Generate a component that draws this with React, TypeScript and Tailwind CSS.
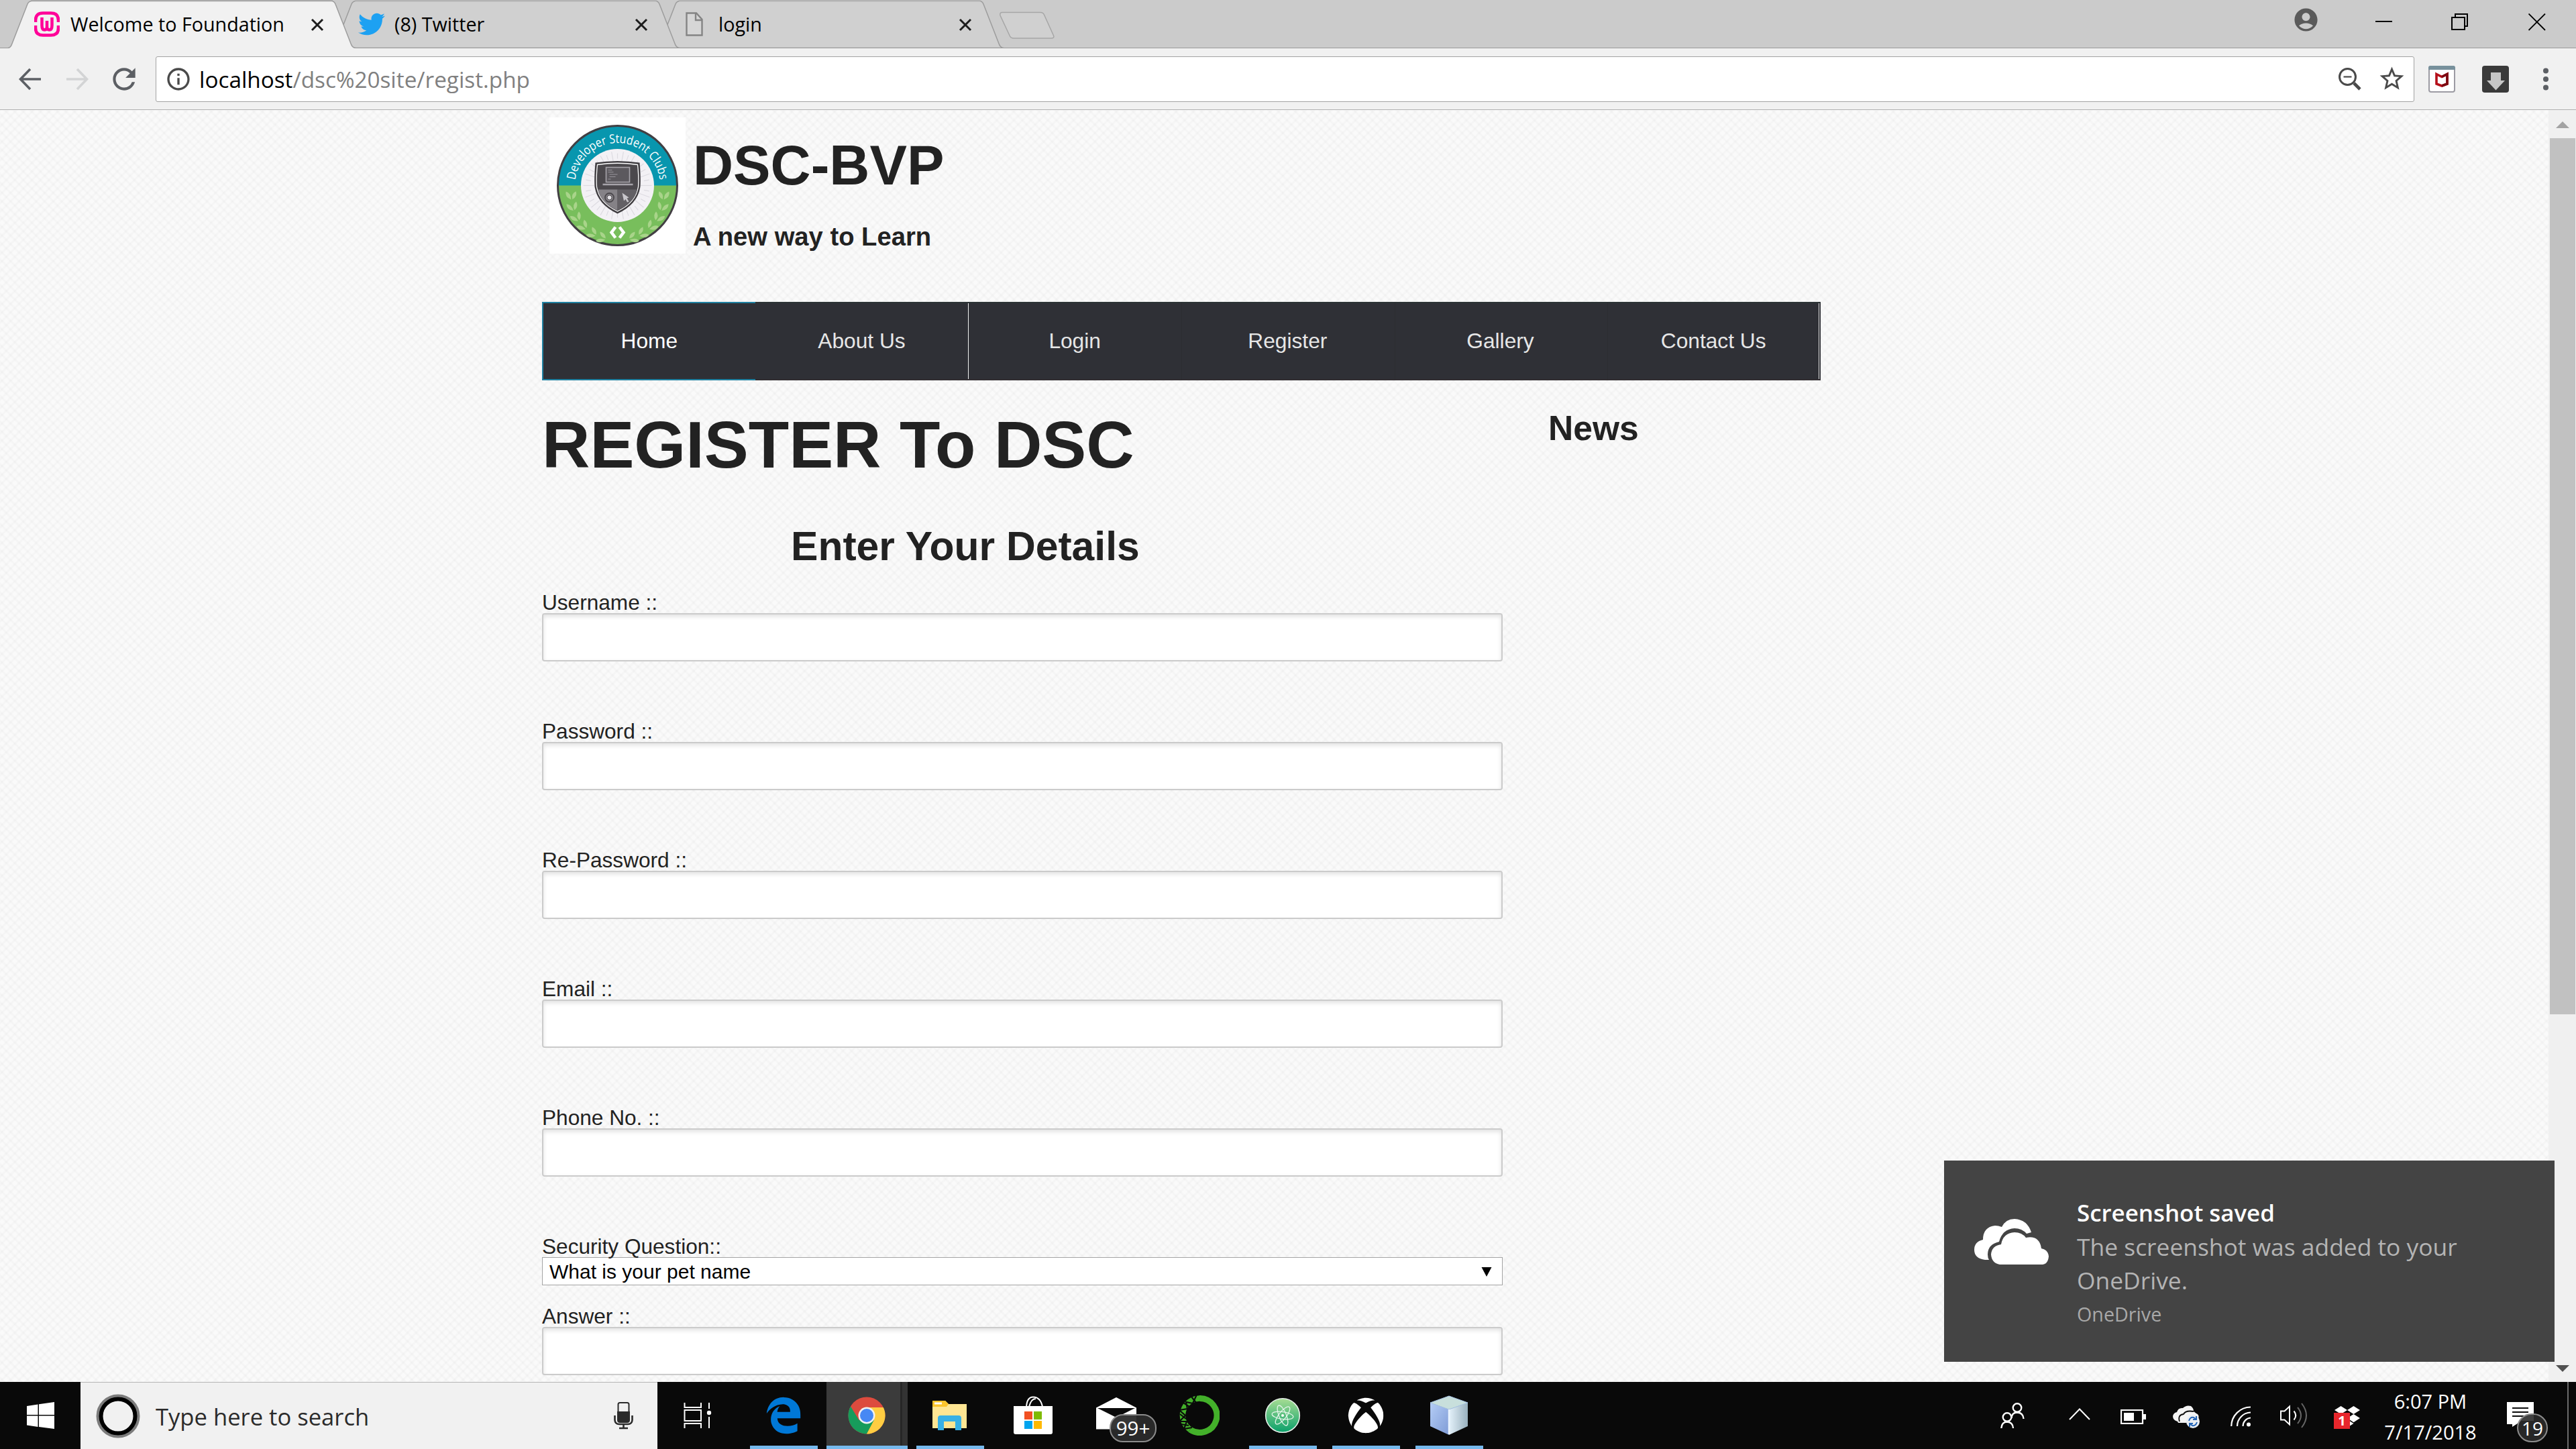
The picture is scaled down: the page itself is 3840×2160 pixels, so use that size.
import type { ReactNode } from "react";
import { FaEdgeLegacy, FaTwitter, FaXbox, FaDropbox } from "react-icons/fa";
import { MdAccountCircle, MdInfoOutline, MdRefresh, MdStarBorder } from "react-icons/md";

/* ---------- browser tabs ---------- */

function TabShape({ active }: { active?: boolean }) {
  const d = "M0 71.5 Q4 71 6 65 L29 6 Q31 1.5 36 1.5 L482 1.5 Q486 1.5 488 6 L511 65 Q513 71 518 71.5";
  return (
    <svg className="absolute inset-0" width="518" height="72" viewBox="0 0 518 72" fill="none">
      <path d={d + " L518 72 L0 72 Z"} fill={active ? "#f1f1f1" : "#d0d0d0"} />
      <path d={d} stroke="#9c9c9c" strokeWidth="1.5" />
      <path d="M34 1 H484" stroke={active ? "#a9a9a9" : "#b3b3b3"} strokeWidth="2" />
      {!active && <path d="M3 71.5 H516" stroke="#9a9a9a" strokeWidth="1.3" />}
    </svg>
  );
}

function CloseX() {
  return (
    <svg width="20" height="20" viewBox="0 0 20 20" stroke="#1c1c1c" strokeWidth="3">
      <path d="M2 2 L18 18 M18 2 L2 18" />
    </svg>
  );
}

function Tab({ icon, title, active, z }: { icon: ReactNode; title: string; active?: boolean; z: string }) {
  return (
    <div className={`relative -mr-[35px] h-[72px] w-[518px] shrink-0 ${z}`}>
      <TabShape active={active} />
      <div className="relative flex h-[71px] items-center pl-[39px] pr-[47px]">
        <div className="flex w-[54px] items-center">{icon}</div>
        <div className="flex-1 whitespace-nowrap text-[28.7px] leading-10 text-black">{title}</div>
        <div className="pt-[3px]">
          <CloseX />
        </div>
      </div>
    </div>
  );
}

function WampIcon() {
  return (
    <svg width="38" height="38" viewBox="0 0 38 38" fill="none">
      <path d="M2 16 V13 Q2 2.5 13 2.5 H25 Q36 2.5 36 13 V16 M2 21 V25 Q2 35.500 13 35.500 H25 Q36 35.500 36 25 V21" stroke="#ff0098" strokeWidth="4.600" />
      <path d="M11.500 9 V21 Q11.500 27.500 15.500 27.500 Q19 27.500 19 22 V14 V22 Q19 27.500 22.500 27.500 Q26.500 27.500 26.500 21 V9" stroke="#ff0098" strokeWidth="4.500" />
    </svg>
  );
}

function PageIcon() {
  return (
    <svg width="26" height="36" viewBox="0 0 26 36" fill="none" stroke="#848484" strokeWidth="2.400" className="ml-[5px]">
      <path d="M1.500 1.500 H16 L24.500 11 V34.500 H1.500 Z" fill="#d6d6d6" />
      <path d="M15 2 V12 H24" />
    </svg>
  );
}

function TabStrip() {
  return (
    <div className="flex h-[72px] justify-between border-b border-[#999] bg-[#cbcbcb]">
      <div className="flex h-[72px] pl-3">
        <Tab z="z-30" active title="Welcome to Foundation" icon={<WampIcon />} />
        <Tab z="z-20" title="(8) Twitter" icon={<FaTwitter size={40} color="#1da1f2" />} />
        <Tab z="z-10" title="login" icon={<PageIcon />} />
        <svg width="84" height="42" viewBox="0 0 84 42" className="ml-[28px] mt-[17px]">
          <path d="M5 1.500 H62 Q66 1.500 67.500 5 L81.500 36 Q83 40 78 40 H22 Q18 40 16.500 37 L2 6 Q1 1.500 5 1.500 Z" fill="#d0d0d0" stroke="#a6a6a6" strokeWidth="1.500" />
        </svg>
      </div>
      <div className="flex items-start pr-[45px]">
        <MdAccountCircle size={41} color="#5a5a5a" className="mr-[83px] mt-[9px]" />
        <svg width="26" height="26" viewBox="0 0 26 26" className="mr-[87px] mt-5">
          <path d="M0 12 H25" stroke="#000" strokeWidth="2" />
        </svg>
        <svg width="26" height="26" viewBox="0 0 26 26" fill="none" stroke="#000" strokeWidth="2" className="mr-[89px] mt-5">
          <path d="M1 6 H20 V24 H1 Z M6 6 V1 H24 V19 H20" />
        </svg>
        <svg width="26" height="26" viewBox="0 0 26 26" stroke="#000" strokeWidth="1.800" className="mt-5">
          <path d="M0.500 0.500 L25 25 M25 0.500 L0.500 25" />
        </svg>
      </div>
    </div>
  );
}

/* ---------- toolbar ---------- */

function Arrow({ color, flip }: { color: string; flip?: boolean }) {
  return (
    <svg width="34" height="34" viewBox="0 0 34 34" fill="none" stroke={color} strokeWidth="3.600" className={flip ? "-scale-x-100" : ""}>
      <path d="M17 2 L2.500 17 L17 32 M3 17 H33" />
    </svg>
  );
}

function Toolbar() {
  return (
    <div className="flex h-[92px] items-center border-b border-[#b0b0b0] bg-[#f1f1f1] pl-7">
      <Arrow color="#5c5f64" />
      <div className="ml-9">
        <Arrow color="#d3d4d5" flip />
      </div>
      <MdRefresh size={50} color="#5c5f64" className="ml-7" />
      <div className="ml-[22px] flex h-[68px] w-[3367px] items-center rounded-[3px] border border-[#a3a3a3] bg-white pl-[13px] pr-[11px]">
        <MdInfoOutline size={40} color="#4a4a4a" />
        <div className="ml-[11px] flex-1 text-[33.3px] leading-10 text-[#808080]">
          <span className="text-black">localhost</span>/dsc%20site/regist.php
        </div>
        <svg width="34" height="34" viewBox="0 0 34 34" fill="none" stroke="#4a4a4a">
          <circle cx="13.500" cy="13.500" r="12" strokeWidth="3" />
          <path d="M7.500 13.500 H19.500" strokeWidth="2.200" />
          <path d="M23 23 L32 32" strokeWidth="4.600" />
        </svg>
        <MdStarBorder size={43} color="#4a4a4a" className="ml-6" />
      </div>
      <svg width="40" height="40" viewBox="0 0 40 40" className="ml-[21px]">
        <rect x="1" y="1" width="38" height="38" rx="3" fill="#fff" stroke="#9c9ba3" strokeWidth="2" />
        <path d="M0 6 V3 Q0 0 3 0 H37 Q40 0 40 3 V6 Z" fill="#78919c" />
        <path d="M12 12.500 L20 16.500 L28 12.500 V27 L20 30 L12 27 Z" fill="none" stroke="#b5101a" strokeWidth="3.600" />
        <path d="M20 16.500 L28 12.500 V27 L20 30" fill="none" stroke="#7d0a12" strokeWidth="3.600" />
      </svg>
      <svg width="40" height="40" viewBox="0 0 40 40" className="ml-10">
        <rect width="40" height="40" rx="4" fill="#3a3a3a" />
        <path d="M13 10 H28 V22 H34 L20.500 36.500 L7 22 H13 Z" fill="#c6c6c6" />
      </svg>
      <svg width="10" height="34" viewBox="0 0 10 34" fill="#5c5f64" className="ml-[50px]">
        <circle cx="5" cy="4.500" r="4" />
        <circle cx="5" cy="17" r="4" />
        <circle cx="5" cy="29.500" r="4" />
      </svg>
    </div>
  );
}

/* ---------- club badge ---------- */

const rays = Array.from({ length: 36 }, (_, i) => i * 10);
const leaves = [
  [-70, 15, -28], [-68, 32, -42], [-62, 48, -55], [-52, 61, -68], [-38, 72, -80], [-24, 79, -92],
];

function ClubBadge() {
  return (
    <svg width="203" height="203" viewBox="-101.500 -101.500 203 203" className="bg-white">
      <circle r="89" fill="#78be5c" />
      <path d="M-89 0 A89 89 0 0 1 89 0 Z" fill="#0896ae" />
      <circle r="89" fill="none" stroke="#423f43" strokeWidth="3" />
      <circle r="54.500" fill="#f3f1f5" />
      {rays.map((a, i) => (
        <path key={a} d={i % 2 ? "M40 0 H48" : "M30 0 H51"} stroke="#dddbe1" strokeWidth="1.200" transform={`rotate(${a})`} />
      ))}
      <defs>
        <path id="arc" d="M-63.500 0 A63.500 63.500 0 0 1 63.500 0" />
      </defs>
      <text fill="#fff" className="font-['Open_Sans',sans-serif] text-[18.500px] font-medium">
        <textPath href="#arc" startOffset="8" textLength="183" lengthAdjust="spacingAndGlyphs">
          Developer Student Clubs
        </textPath>
      </text>
      {leaves.map(([x, y, r]) =>
        [1, -1].map((s) => (
          <g key={`${x}${s}`} transform={`scale(${s} 1) translate(${x} ${y}) rotate(${r + 20})`} fill="#a9d48a">
            <path d="M0 6 Q-9 1 -6 -7 Q1 -4 0 6 Z" />
            <path d="M2 6 Q1 -3 9 -5 Q10 3 2 6 Z" />
          </g>
        )),
      )}
      <path d="M-3 62 L-9 70 L-3 78 M3 62 L9 70 L3 78" stroke="#fff" strokeWidth="4.500" fill="none" />
      <path d="M-33 -34 Q0 -39 33 -34 Q35 -12 34 2 Q30 28 0 42 Q-30 28 -34 2 Q-35 -12 -33 -34 Z" fill="#3f3c40" />
      <path d="M-30 -31 Q0 -35.500 30 -31 Q32 -12 31 2 Q27 26 0 38.500 Q-27 26 -31 2 Q-32 -12 -30 -31 Z" fill="#4b484c" stroke="#fff" strokeWidth="1.300" />
      <path d="M-29.500 6 H0 V37 Q-25 26 -29.500 6 Z" fill="#858287" />
      <path d="M29.500 6 H0 V37 Q25 26 29.500 6 Z" fill="#636065" />
      <rect x="-17" y="-27" width="35" height="22" fill="#5c595e" stroke="#a7a4aa" strokeWidth="1.600" />
      <path d="M-22 -1.500 H23" stroke="#a7a4aa" strokeWidth="2.600" />
      <path d="M-14 -23 H-8 M-14 -20 H-6 M-12 -16.500 H0 M-12 -13 H-3 M-14 -9.500 H-10" stroke="#98959b" strokeWidth="1.200" />
      <circle cx="-12" cy="18" r="6.500" fill="none" stroke="#4b484c" strokeWidth="1.800" />
      <circle cx="-12" cy="18" r="3.500" fill="#e6e4e8" stroke="#4b484c" />
      <path d="M7 11 L17 18 L14 19 L17 24 L14.500 25 L12 20.500 L9.500 23 Z" fill="#c9c7cc" />
    </svg>
  );
}

/* ---------- page ---------- */

function Nav() {
  const cell = "flex items-center justify-center border-y-2 border-t-[#2d3436] border-b-[#322e32] text-[31.700px] text-[#e6e6e6]";
  return (
    <nav className="grid h-[117px] w-[1906px] grid-cols-6 bg-[#2f3036]">
      <div className="flex items-center justify-center border-y-2 border-l-2 border-[#1f80a0] text-[31.700px] text-white">Home</div>
      <div className={cell}>About Us</div>
      <div className={cell}>
        <div className="-mr-px h-full w-px bg-[#f0f0f0]" />
        <div className="flex-1 text-center">Login</div>
      </div>
      <div className={`${cell} border-l border-l-[#2c2d32] pr-[2px]`}>Register</div>
      <div className={`${cell} border-l border-l-[#2c2d32] pr-[3px]`}>Gallery</div>
      <div className={`${cell} border-l border-l-[#2c2d32]`}>
        <div className="flex-1 text-center">Contact Us</div>
        <div className="mr-[2px] h-full w-px bg-[#e0e0e0]" />
      </div>
    </nav>
  );
}

function Field({ label }: { label: string }) {
  return (
    <label className="block text-[31.600px] leading-8 text-[#222]">
      {label}
      <span className="block h-[72px] w-full rounded-[4px] border-2 border-[#cbcbcb] bg-white shadow-[inset_0_3px_6px_rgba(0,0,0,0.12)]" />
    </label>
  );
}

function Page() {
  return (
    <div className="h-full w-[3799px] overflow-hidden bg-[#fafafa] bg-[repeating-linear-gradient(45deg,transparent_0_2px,rgba(0,0,0,0.019)_4px_5px,transparent_7px_9px),repeating-linear-gradient(-45deg,transparent_0_2px,rgba(0,0,0,0.019)_4px_5px,transparent_7px_9px)] pl-[808px] font-['Liberation_Sans',Arial,sans-serif] text-[#222]">
      <header className="flex h-[286px] pl-[11px] pt-[11px]">
        <ClubBadge />
        <div className="ml-[11px] mt-[22px] font-bold">
          <h1 className="text-[83.200px] leading-[100px]">DSC-BVP</h1>
          <h4 className="mt-[34px] text-[38.200px] leading-[44px]">A new way to Learn</h4>
        </div>
      </header>
      <Nav />
      <div className="flex pt-[41px]">
        <main className="w-[1432px]">
          <h1 className="text-[98.900px] font-bold leading-[110px]">REGISTER To DSC</h1>
          <h2 className="mt-[61px] pl-[371px] text-[60.600px] font-bold leading-[70px]">Enter Your Details</h2>
          <div className="mt-[33px] flex flex-col gap-[88px]">
            <Field label="Username ::" />
            <Field label="Password ::" />
            <Field label="Re-Password ::" />
            <Field label="Email ::" />
            <Field label="Phone No. ::" />
            <div className="text-[31.600px] leading-8">
              <div>Security Question::</div>
              <div className="flex h-[42px] items-center justify-between border border-[#a4a4a4] bg-white pl-[10px] pr-[15px] pt-px text-[30px] leading-8 text-black">
                <span>What is your pet name</span>
                <svg width="16" height="14" viewBox="0 0 16 14">
                  <path d="M0.500 0 H15.500 L8 14 Z" />
                </svg>
              </div>
              <div className="mt-[30px]">
                <Field label="Answer ::" />
              </div>
            </div>
          </div>
        </main>
        <aside className="pl-[68px]">
          <h3 className="text-[51.600px] font-bold leading-[60px]">News</h3>
        </aside>
      </div>
    </div>
  );
}

function Scrollbar() {
  return (
    <div className="flex h-full w-[41px] flex-col items-center bg-[#f0f0f0]">
      <svg width="20" height="10" viewBox="0 0 20 10" className="mt-[17px]">
        <path d="M10 0 L20 10 H0 Z" fill="#a3a3a3" />
      </svg>
      <div className="mt-[15px] h-[1306px] w-[38px] bg-[#c1c1c1]" />
      <svg width="20" height="10" viewBox="0 0 20 10" className="mb-[15px] mt-auto">
        <path d="M0 0 H20 L10 10 Z" fill="#505050" />
      </svg>
    </div>
  );
}

function Toast() {
  return (
    <div className="absolute bottom-[130px] right-8 z-40 flex h-[300px] w-[910px] bg-[#444] pl-[45px] pt-[53px] text-[#b4b4b4]">
      <svg width="111" height="69" viewBox="0 0 111 69" fill="#fff" className="mt-[34px]">
        <path d="M22 61 H16 Q0 59 0 46 Q0 34 13 31 Q13 12 31 10 Q36 10 41 12 Q47 0 60 0 Q79 1 85 20 L78 22 Q71 14 60 14 Q42 15 37 34 Q20 38 20 53 Q20 58 22 61 Z" />
        <path d="M38 68 Q26 66 25 53 Q26 40 40 38 Q43 21 60 20 Q71 20 77 28 Q97 24 100 44 Q110 46 111 56 Q110 67 102 68 Z" />
      </svg>
      <div className="ml-[42px] w-[620px]">
        <div className="text-[34.900px] font-semibold leading-[50px] text-white">Screenshot saved</div>
        <div className="text-[35.400px] leading-[50px]">
          The screenshot was added to your
          <br />
          OneDrive.
        </div>
        <div className="mt-[6px] text-[28.700px] leading-10 text-[#a8a8a8]">OneDrive</div>
      </div>
    </div>
  );
}

/* ---------- taskbar ---------- */

function AppSlot({ children, open, active }: { children: ReactNode; open?: boolean; active?: boolean }) {
  return (
    <div className="relative flex h-full w-[124px] items-center justify-center">
      {active && (
        <div className="absolute inset-y-0 left-[2px] flex w-[121px]">
          <div className="w-[110px] bg-[#3b3b3b]" />
          <div className="w-[3px] bg-[#262626]" />
          <div className="w-[8px] bg-[#333]" />
        </div>
      )}
      <div className="relative">{children}</div>
      {open && <div className={`absolute bottom-0 h-[5px] bg-[#76b9ed] ${active ? "left-[2px] w-[121px]" : "left-[12px] w-[101px]"}`} />}
    </div>
  );
}

function ChromeIcon() {
  return (
    <svg width="56" height="56" viewBox="-28 -28 56 56">
      <circle r="27.500" fill="#dd4b3e" />
      <path d="M-24 -13.500 A27.500 27.500 0 0 0 0 27.500 L12 6.500 L-11.500 7 Z" fill="#179c5b" />
      <path d="M0 27.500 A27.500 27.500 0 0 0 24.800 -12 H0 L11 6.500 Z" fill="#ffcd42" />
      <circle r="12.500" fill="#f1f1f1" />
      <circle r="10" fill="#4688f4" />
    </svg>
  );
}

function ExplorerIcon() {
  return (
    <svg width="54" height="46" viewBox="0 0 54 46">
      <path d="M1 1 H20 L25 6 H52 V42 H1 Z" fill="#ffe693" />
      <path d="M1 1 H20 L25 6 L22 10 H1 Z" fill="#fcc42c" />
      <path d="M4 5 H15" stroke="#fff" strokeWidth="3" />
      <path d="M9 45 V27 Q9 23 13 23 H40 Q44 23 44 27 V45 H35 V32 H18 V45 Z" fill="#38b1e6" />
    </svg>
  );
}

function StoreIcon() {
  return (
    <svg width="58" height="58" viewBox="0 0 58 58">
      <path d="M19 16 Q20 1.500 29 1.500 Q40 1.500 43 16 M23 16 Q26 4 33 4" fill="none" stroke="#fff" strokeWidth="2" />
      <path d="M0 15 H58 V54 Q58 57 55 57 H3 Q0 57 0 54 Z" fill="#fff" />
      <path d="M16 23 H28 V35 H16 Z" fill="#f25022" />
      <path d="M30 23 H42 V35 H30 Z" fill="#7fba00" />
      <path d="M16 37 H28 V49 H16 Z" fill="#00a4ef" />
      <path d="M30 37 H42 V49 H30 Z" fill="#ffb900" />
    </svg>
  );
}

function MailIcon() {
  return (
    <div className="relative h-[54px] w-[60px]">
      <svg width="60" height="48" viewBox="0 0 60 48">
        <path d="M0 15.500 L30 0 L60 15.500 V47.500 H0 Z" fill="#fff" />
        <path d="M2 16 H58 L30 30 Z" fill="#0b0b0b" />
      </svg>
      <div className="absolute left-5 top-[25px] flex h-[42px] w-[70px] items-center justify-center rounded-[20px] border-2 border-[#8c8c8c] bg-[#2b2b2b]/95 text-[29.500px] font-medium leading-none text-white">
        99+
      </div>
    </div>
  );
}

function AnacondaIcon() {
  return (
    <svg width="60" height="60" viewBox="-30 -30 60 60" fill="none">
      <path d="M0 -25.500 A25.500 25.500 0 1 1 -14 21" stroke="#43b02a" strokeWidth="9" />
      <path d="M0 -25.500 A25.500 25.500 0 0 0 -14 21" stroke="#43b02a" strokeWidth="8.500" />
      <path d="M-4 -31 L-10 -18 L-20 -20 L-18 -10 L-30 -8 L-21 0 L-30 9 L-19 9 L-23 20 L-11 18 M-12 -28 L-5 -19 M-24 -19 L-15 -13 M-29 -2 L-20 5 M-27 13 L-16 15" stroke="#0b0b0b" strokeWidth="2.200" />
    </svg>
  );
}

function AtomIcon() {
  return (
    <svg width="54" height="54" viewBox="-27 -27 54 54">
      <defs>
        <linearGradient id="atom" x1="0" y1="0" x2="0" y2="1">
          <stop offset="0" stopColor="#a8dd94" />
          <stop offset="1" stopColor="#0aa06a" />
        </linearGradient>
      </defs>
      <circle r="25.300" fill="url(#atom)" stroke="#e6efe9" strokeWidth="1.600" />
      <g fill="none" stroke="#e4f5ea" strokeWidth="1.300">
        <ellipse rx="16" ry="5.500" transform="rotate(8)" />
        <ellipse rx="16" ry="5.500" transform="rotate(68)" />
        <ellipse rx="16" ry="5.500" transform="rotate(-52)" />
      </g>
      <circle r="2" fill="#fff" />
    </svg>
  );
}

function CubeIcon() {
  return (
    <svg width="58" height="60" viewBox="0 0 58 60">
      <defs>
        <linearGradient id="cl" x1="0" y1="0" x2="1" y2="1">
          <stop offset="0" stopColor="#b4cdf6" />
          <stop offset="1" stopColor="#7f9bd6" />
        </linearGradient>
        <linearGradient id="cr" x1="0" y1="0" x2="1" y2="0">
          <stop offset="0" stopColor="#e4f1fa" />
          <stop offset="1" stopColor="#98b0bd" />
        </linearGradient>
      </defs>
      <path d="M1 11 L29 21 V59 L1 46 Z" fill="url(#cl)" />
      <path d="M57 11 L29 21 V59 L57 46 Z" fill="url(#cr)" />
      <path d="M29 1 L57 11 L29 21 L1 11 Z" fill="#c8dfdc" stroke="#a9c6e8" />
      <path d="M29 21 V58" stroke="#eaf4ff" strokeWidth="2.500" />
    </svg>
  );
}

function TrayItem({ children, w = "w-20" }: { children: ReactNode; w?: string }) {
  return <div className={`flex h-full items-center justify-center ${w}`}>{children}</div>;
}

function Tray() {
  return (
    <div className="ml-auto flex h-full items-center">
      <TrayItem w="w-[121px]">
        <svg width="36" height="38" viewBox="0 0 36 38" fill="none" stroke="#fff" strokeWidth="2.400">
          <circle cx="25" cy="7.500" r="6.300" />
          <path d="M16.500 23 Q17 14.500 25 14.500 Q34 15 34.500 24" />
          <circle cx="10" cy="21.500" r="6.300" />
          <path d="M1.300 38 Q2 28.500 10 28.500 Q18.500 29 19 38" />
        </svg>
      </TrayItem>
      <TrayItem>
        <svg width="32" height="18" viewBox="0 0 32 18" fill="none" stroke="#fff" strokeWidth="2" className="-mt-1">
          <path d="M1 17 L16 1.500 L31 17" />
        </svg>
      </TrayItem>
      <TrayItem>
        <svg width="38" height="22" viewBox="0 0 38 22" className="mt-[3px]">
          <rect x="1" y="1" width="32" height="20" fill="none" stroke="#fff" strokeWidth="2.200" />
          <rect x="5" y="5" width="15" height="12" fill="#fff" />
          <rect x="34" y="7" width="4" height="8" fill="#fff" />
        </svg>
      </TrayItem>
      <TrayItem>
        <svg width="42" height="34" viewBox="0 0 42 34" className="mt-1">
          <path d="M7 24 Q0 22 0 16 Q1 11 6 10 Q8 3 15 4 Q20 -1 27 1 Q31 4 31 9 L35 12 Q40 14 38 20 L30 26 H8 Z" fill="#f4f4f4" />
          <path d="M10 24 Q7 14 16 13 Q19 7 31 9" stroke="#0b0b0b" strokeWidth="1.800" fill="none" />
          <circle cx="30" cy="24" r="10" fill="#e9edf2" />
          <path d="M24 23 Q26 17 31 18 L35 21 M35 16 V21 H30 M36 25 Q34 31 29 30 L25 27 M25 32 V27 H30" stroke="#2566b8" strokeWidth="2" fill="none" />
        </svg>
      </TrayItem>
      <TrayItem>
        <svg width="30" height="31" viewBox="0 0 30 31" fill="none" stroke="#fff" strokeWidth="2.200" className="mt-[3px]">
          <path d="M1.200 30 A29 29 0 0 1 30 1.500 M10 30 A20.500 20.500 0 0 1 30 9.500 M18.500 30 A12.500 12.500 0 0 1 30 17.500" />
          <circle cx="27" cy="27.500" r="3" fill="#fff" stroke="none" />
        </svg>
      </TrayItem>
      <TrayItem>
        <svg width="42" height="38" viewBox="0 0 42 38" fill="none" stroke="#fff" strokeWidth="2">
          <path d="M1 12.500 H6.500 L14 5.500 V32.500 L6.500 25.500 H1 Z" />
          <path d="M20.500 12.500 Q26 19 20.500 25.500" />
          <path d="M26 7 Q36 19 26 31 M32 1 Q46 19 32 37" stroke="#666" />
        </svg>
      </TrayItem>
      <TrayItem>
        <div className="relative mr-[4px] mt-[5px] h-[35px] w-[38px]">
          <FaDropbox size={38} color="#fff" className="absolute -top-[2px] left-[1px]" />
          <div className="absolute bottom-0 left-0 flex h-6 w-6 items-center justify-center bg-[#e8262c] text-[20px] font-bold leading-none text-white">1</div>
        </div>
      </TrayItem>
      <div className="mt-[4px] w-[166px] text-center text-[29px] leading-[46px] text-white">
        <div>6:07 PM</div>
        <div>7/17/2018</div>
      </div>
      <div className="relative h-full w-[121px]">
        <svg width="40" height="38" viewBox="0 0 40 38" className="absolute left-[31px] top-[30px]">
          <path d="M0 0 H40 V28 H22 L8 37 V33 H0 Z" fill="#fff" />
          <path d="M8 9 H32 M8 15 H32 M8 21 H26" stroke="#0b0b0b" strokeWidth="2" />
        </svg>
        <div className="absolute left-[46px] top-[47px] flex h-[43px] w-[46px] items-center justify-center rounded-full border-2 border-[#8c8c8c] bg-[#2b2b2b]/90 text-[28px] font-medium leading-none text-white">19</div>
      </div>
      <div className="h-full w-[2px] bg-[#6b6b6b]" />
      <div className="w-[11px]" />
    </div>
  );
}

function Taskbar() {
  return (
    <div className="flex h-[100px] bg-[#090909]">
      <div className="flex w-[120px] items-center justify-center">
        <svg width="41" height="41" viewBox="0 0 41 41" fill="#fff">
          <path d="M0 6 L16.500 3.500 V19 H0 Z M18 3.300 L41 0 V19 H18 Z M0 20.500 H16.500 V37 L0 34.500 Z M18 20.500 H41 V40 L18 37 Z" />
        </svg>
      </div>
      <div className="flex w-[860px] items-center border-t border-[#b5b5b5] bg-[#f1f1f1] pl-[23px] pr-[36px]">
        <svg width="66" height="66" viewBox="-33 -33 66 66">
          <circle r="30" fill="none" stroke="#7c7c7c" strokeWidth="5" />
          <circle r="25.500" fill="none" stroke="#000" strokeWidth="6" />
        </svg>
        <div className="ml-[23px] mt-[2px] flex-1 text-[34.600px] leading-10 text-[#2b2b2b]">Type here to search</div>
        <svg width="29" height="41" viewBox="0 0 29 41" fill="none" stroke="#2b2b2b" strokeWidth="2">
          <rect x="6.500" y="1" width="16" height="28" rx="2.500" />
          <path d="M6 15 H23 V27 Q23 30 20 30 H9 Q6 30 6 27 Z" fill="#2b2b2b" />
          <path d="M1.500 20 V27 Q2 33 8 33 H21 Q27 33 27.500 27 V20 M14.500 33 V38 M8 39 H21" strokeWidth="2.600" />
        </svg>
      </div>
      <div className="flex w-[126px] items-center justify-center pr-[6px]">
        <svg width="42" height="38" viewBox="0 0 42 38" fill="none" stroke="#fff" strokeWidth="2">
          <path d="M1.500 0 V7 H26 V0 M1.500 11 H26 V27 H1.500 Z M1.500 38 V31 H26 V38 M38 0 V9 M38 21 V38" />
          <circle cx="38" cy="15" r="3.200" fill="#fff" stroke="none" />
        </svg>
      </div>
      <AppSlot open>
        <FaEdgeLegacy size={56} color="#0078d7" />
      </AppSlot>
      <AppSlot open active>
        <ChromeIcon />
      </AppSlot>
      <AppSlot open>
        <ExplorerIcon />
      </AppSlot>
      <AppSlot>
        <StoreIcon />
      </AppSlot>
      <AppSlot>
        <MailIcon />
      </AppSlot>
      <AppSlot>
        <AnacondaIcon />
      </AppSlot>
      <AppSlot open>
        <AtomIcon />
      </AppSlot>
      <AppSlot open>
        <FaXbox size={54} color="#fff" />
      </AppSlot>
      <AppSlot open>
        <CubeIcon />
      </AppSlot>
      <Tray />
    </div>
  );
}

export default function App() {
  return (
    <div className="relative flex h-[2160px] w-[3840px] flex-col overflow-hidden font-['Open_Sans','Noto_Sans',sans-serif]">
      <TabStrip />
      <Toolbar />
      <div className="flex h-[1896px]">
        <Page />
        <Scrollbar />
      </div>
      <Taskbar />
      <Toast />
    </div>
  );
}
